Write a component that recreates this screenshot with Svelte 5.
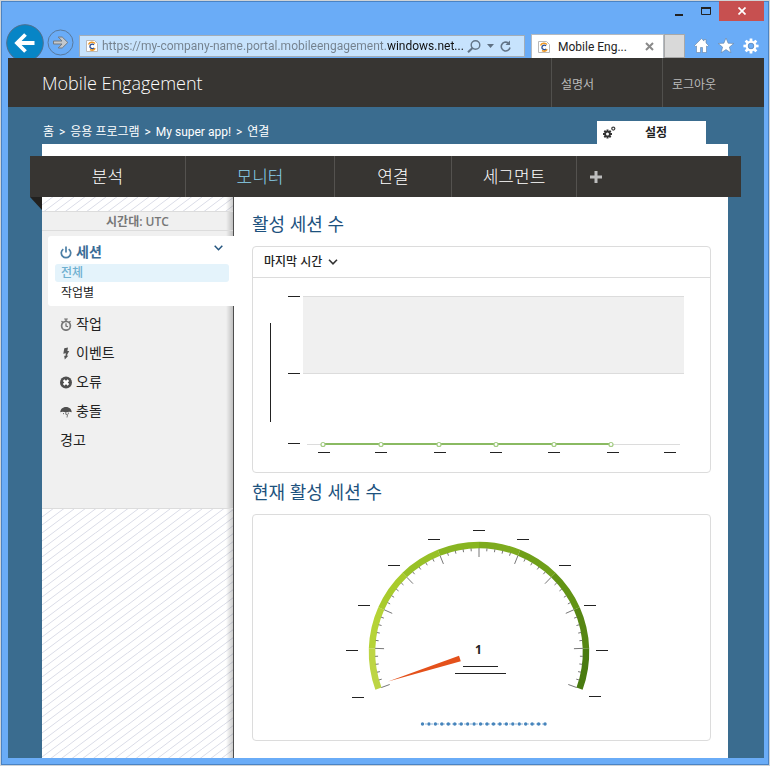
<script>
  const menu = [
    { label: '분석', width: 156 },
    { label: '모니터', width: 149, active: true },
    { label: '연결', width: 117 },
    { label: '세그먼트', width: 125 }
  ];

  const crumbs = ['홈', '응용 프로그램', 'My super app!', '연결'];

  const views = [
    { label: '작업', icon: 'timer' },
    { label: '이벤트', icon: 'bolt' },
    { label: '오류', icon: 'error' },
    { label: '충돌', icon: 'storm' },
    { label: '경고', icon: null }
  ];

  const points = [70, 128, 186, 243, 301, 358];
  const xLabels = [65, 122, 181, 237, 295, 354, 411];

  // Gauge geometry: a 220 degree dial in ten steps.
  const cx = 226;
  const cy = 137;
  const bands = ['#bdd544', '#b5d336', '#a8cb2c', '#98c127', '#88b521', '#7dab1e', '#6f9f19', '#629314', '#568613', '#497b10'];

  function polar(deg, r) {
    const a = (deg * Math.PI) / 180;
    return [cx + r * Math.sin(a), cy - r * Math.cos(a)];
  }

  const arcs = bands.map((color, i) => {
    const from = polar(-110 + i * 22, 107);
    const to = polar(-110 + (i + 1) * 22, 107);
    return { color, d: `M${from} A107 107 0 0 1 ${to}` };
  });

  const ticks = Array.from({ length: 51 }, (_, i) => {
    const deg = -110 + i * 4.4;
    const major = i % 5 === 0;
    const [x1, y1] = polar(deg, 104);
    const [x2, y2] = polar(deg, major ? 95 : 101);
    return { x1, y1, x2, y2 };
  });

  const dialLabels = [[99, 182], [93, 135], [105, 90], [135, 50], [175, 24], [220, 15], [264, 24], [306, 50], [331, 90], [343, 135], [336, 181]];
  const dots = Array.from({ length: 20 }, (_, i) => 169.5 + i * 6.45);

  let url = $state('https://my-company-name.portal.mobileengagement.windows.net...');
</script>

{#snippet favicon()}
  <svg class="favicon" width="12" height="12" viewBox="0 0 12 12" aria-hidden="true">
    <path d="M.5.5h8l3 3v8H.5z" fill="#fff" stroke="#b9b9b9" />
    <path d="M2.500 4.500A4 4 0 0 1 9 3.500M9.200 8.300A4 4 0 0 1 4 9.500" fill="none" stroke="#f09a26" stroke-width="1.600" />
    <path d="M8 4.900A2.300 2.300 0 1 0 8 7.900" fill="none" stroke="#2a4f94" stroke-width="1.300" />
  </svg>
{/snippet}

<div class="window">
  <header class="chrome">
    <div class="caption">
      <button aria-label="Minimize"><svg width="10" height="10"><path d="M1 8h8v3H1z" fill="#222" /></svg></button>
      <button aria-label="Maximize"><svg width="10" height="8"><path d="M.5 1.500h9v6h-9z" fill="none" stroke="#222" /><path d="M0 0h10v2H0z" fill="#222" /></svg></button>
      <button class="close" aria-label="Close"><svg width="8" height="8"><path d="M.5.500l7 7M7.500.500l-7 7" stroke="#fff" stroke-width="1.700" /></svg></button>
    </div>
    <div class="toolbar">
      <button class="back" aria-label="Back">
        <svg width="38" height="38" viewBox="0 0 38 38">
          <circle cx="19" cy="19" r="18.300" fill="#0785c6" stroke="#4f6f8d" />
          <path d="M28.500 19H11M19.500 10.500L11 19l8.500 8.500" fill="none" stroke="#fff" stroke-width="3.800" />
        </svg>
      </button>
      <button class="forward" aria-label="Forward">
        <svg width="27" height="27" viewBox="0 0 27 27">
          <circle cx="13.500" cy="13.500" r="12.500" fill="none" stroke="#59799c" />
          <path d="M6.500 12h8.500l-3.800-4h4l5.600 5.500-5.600 5.500h-4L15 15H6.500z" fill="#c3c8cd" stroke="#737b84" />
        </svg>
      </button>
      <div class="address">
        {@render favicon()}
        <input aria-label="Address" bind:value={url} />
        <div class="address-tools">
          <button aria-label="Search">
            <svg width="14" height="13"><circle cx="8.500" cy="5" r="4.300" fill="none" stroke="#627487" stroke-width="1.400" /><path d="M5.500 8L1 12.300" stroke="#627487" stroke-width="2" /></svg>
          </button>
          <button aria-label="Show address list">
            <svg width="7" height="4"><path d="M0 0h7L3.500 4z" fill="#5f7183" /></svg>
          </button>
          <button aria-label="Refresh">
            <svg width="12" height="13"><path d="M8 2.800A4.400 4.400 0 1 0 10 7.500" fill="none" stroke="#627487" stroke-width="1.600" /><path d="M5.500 4.900H10V.500z" fill="#627487" /></svg>
          </button>
        </div>
      </div>
      <div class="page-tab">
        {@render favicon()}
        <span>Mobile Eng...</span>
        <button aria-label="Close tab"><svg width="9" height="9"><path d="M1 1l7 7M8 1L1 8" stroke="#8a8a8a" stroke-width="2" /></svg></button>
      </div>
      <button class="new-tab" aria-label="New tab"></button>
      <div class="tools">
        <button aria-label="Home">
          <svg width="15" height="15"><path d="M7.500.600L.5 7.500l1.200 1L2.500 8v6.500h4V9.500h2v5h4V8l.8.500 1.200-1-2.500-2.500V1.500h-2v1.600z" fill="#fff" stroke="#66819f" stroke-width=".6" /></svg>
        </button>
        <button aria-label="Favorites">
          <svg width="16" height="15"><path d="M8 0l2.100 5.200 5.700.3-4.400 3.600 1.500 5.700L8 11.600l-4.900 3.200 1.500-5.700L.2 5.500l5.700-.3z" fill="#fff" stroke="#66819f" stroke-width=".6" /></svg>
        </button>
        <button aria-label="Tools">
          <svg width="16" height="16" viewBox="-8 -8 16 16">
            {#each [0, 45, 90, 135, 180, 225, 270, 315] as a}
              <path d="M-1.600-4L-1.300-7.600H1.300L1.600-4z" transform="rotate({a})" fill="#fff" />
            {/each}
            <circle r="4.200" fill="none" stroke="#fff" stroke-width="2.200" /><circle r="2.800" fill="#6aacf7" stroke="#66819f" stroke-width=".6" />
          </svg>
        </button>
      </div>
    </div>
  </header>

  <div class="site">
    <div class="topbar">
      <h1>Mobile Engagement</h1>
      <a class="docs" href="#docs">설명서</a>
      <a class="logout" href="#logout">로그아웃</a>
    </div>

    <div class="pathbar">
      <nav class="crumbs" aria-label="Breadcrumb">
        {#each crumbs as crumb, i}
          {#if i}<span>&gt;</span>{/if}
          <a href="#path">{crumb}</a>
        {/each}
      </nav>
      <a class="settings" href="#settings">
        <svg width="13" height="13" viewBox="0 0 13 13" aria-hidden="true">
          <g transform="translate(4.500 8)">
            {#each [0, 45, 90, 135] as a}<path d="M-1-4.500h2v9h-2z" transform="rotate({a})" fill="#333" />{/each}
            <circle r="3.200" fill="#333" /><circle r="1.500" fill="#fff" />
          </g>
          <circle cx="10.300" cy="2.600" r="1.500" fill="none" stroke="#444" stroke-width="1.300" />
        </svg>
        <span>설정</span>
      </a>
    </div>

    <div class="sheet">
      <nav class="menu" aria-label="Main">
        {#each menu as item}
          <a href="#menu" class:active={item.active} style="width: {item.width}px">{item.label}</a>
        {/each}
        <button aria-label="Add"><svg width="12" height="12"><path d="M6 0v12M0 6h12" stroke="#bdbdbd" stroke-width="3" /></svg></button>
      </nav>

      <div class="body">
        <aside>
          <div class="panel">
            <div class="zone">시간대: UTC</div>
            <div class="group">
              <button class="group-title">
                <svg width="12" height="13"><path d="M3.300 3.100A4.700 4.700 0 1 0 8.700 3.100" fill="none" stroke="#4b7fa6" stroke-width="1.700" /><path d="M6 .5v6" stroke="#4b7fa6" stroke-width="1.700" /></svg>
                <span>세션</span>
                <svg class="chev" width="9" height="6"><path d="M.7.700l3.800 4 3.800-4" fill="none" stroke="#24557f" stroke-width="1.500" /></svg>
              </button>
              <a class="sub current" href="#all">전체</a>
              <a class="sub" href="#by-job">작업별</a>
            </div>
            <ul>
              {#each views as view}
                <li>
                  <a href="#view">
                    {#if view.icon}
                      <svg width="12" height="13" viewBox="0 0 12 13" aria-hidden="true">
                        {#if view.icon === 'timer'}
                          <circle cx="6" cy="7.800" r="4.400" fill="none" stroke="#777" stroke-width="1.700" />
                          <path d="M4.200 1h3.600M6 1v2.500M6 5.300V8l2 .8M1.500 3.200l1.200 1M10.500 3.200l-1.200 1" fill="none" stroke="#666" stroke-width="1.200" />
                        {:else if view.icon === 'bolt'}
                          <path d="M4.300 1.200l3.700-.7-.6 3.600 1.800-.2-2.400 4.600 1.500.2-3.500 3.700-.6-3.600 1.200.1.500-2.600-2.600.4z" fill="#555" />
                        {:else if view.icon === 'error'}
                          <circle cx="6" cy="6.500" r="6" fill="#4f4f4f" />
                          <path d="M3.600 4.100l4.800 4.800M8.400 4.100L3.600 8.900" stroke="#fff" stroke-width="2.300" />
                        {:else}
                          <path d="M.3 7.200C.3 4.500 2.500 2 6 2s5.700 2.500 5.700 5.200L9.500 6.800 6 7.300 2.500 6.800z" fill="#4f4f4f" />
                          <path d="M5.800 7v2.300l1.700.3-.5 2.900M3.500 8v1.200M8.300 7.500v1.700" fill="none" stroke="#777" stroke-width="1" />
                        {/if}
                      </svg>
                    {/if}
                    <span>{view.label}</span>
                  </a>
                </li>
              {/each}
            </ul>
          </div>
        </aside>

        <main>
          <h2>활성 세션 수</h2>
          <section class="card">
            <div class="card-head">
              <label>
                <select aria-label="기간"><option>마지막 시간</option></select>
                <svg width="10" height="6"><path d="M1 .800l4 4 4-4" fill="none" stroke="#333" stroke-width="1.600" /></svg>
              </label>
            </div>
            <svg class="plot" viewBox="0 0 457 194" role="img" aria-label="활성 세션 수">
              <path d="M50 18h381v78H50z" fill="#f0f0f0" />
              <path d="M50 18.500h381M50 95.500h381M54 166.500h373" stroke="#dcdcdc" />
              <path d="M17.500 45v99M35 18.500h12M35 95.500h12M35 165.500h12" stroke="#222" />
              {#each xLabels as x}<path d="M{x} 174.500h12" stroke="#222" />{/each}
              <path d="M70 166h288" stroke="#8aba62" stroke-width="2" />
              {#each points as x}<circle cx={x} cy="166.500" r="2" fill="#fff" stroke="#a4cc84" stroke-width="1.200" />{/each}
            </svg>
          </section>

          <h2>현재 활성 세션 수</h2>
          <section class="card">
            <svg class="plot" viewBox="0 0 457 225" role="img" aria-label="현재 활성 세션 수">
              {#each arcs as arc}<path d={arc.d} fill="none" stroke={arc.color} stroke-width="6.500" />{/each}
              {#each ticks as t}<path d="M{t.x1} {t.y1}L{t.x2} {t.y2}" stroke="#777" />{/each}
              {#each dialLabels as [x, y]}<path d="M{x} {y}.5h12" stroke="#222" />{/each}
              <path d="M135 166.500L206 140.700l1.800 5.600z" fill="#e4511b" />
              <text x="225.500" y="139" text-anchor="middle">1</text>
              <path d="M210 151.500h35M202 158.500h51" stroke="#222" />
              <path d="M169 209h124" stroke="#8fb6da" stroke-dasharray="2 1" />
              {#each dots as x}<circle cx={x} cy="209" r="1.700" fill="#4684bb" />{/each}
            </svg>
          </section>
        </main>
      </div>
    </div>
  </div>
</div>

<style>
  .window {
    box-sizing: border-box;
    min-height: 100vh;
    display: flex;
    flex-direction: column;
    padding: 0 5px 7px 7px;
    border: 1px solid #cfd3d6;
    background: #6aacf7;
    font-family: "Open Sans", "Noto Sans CJK KR", sans-serif;
    font-size: 12px;
    color: #222;
    box-shadow: inset 0 0 0 1px #4a83c4;
  }
  a { color: inherit; text-decoration: none; }
  button {
    padding: 0;
    border: 0;
    background: none;
    font: inherit;
    color: inherit;
    display: flex;
    align-items: center;
    justify-content: center;
  }
  svg { display: block; flex: none; }

  .chrome { height: 57px; display: flex; flex-direction: column; font-family: Roboto, "Noto Sans CJK KR", sans-serif; }
  .caption { height: 20px; display: flex; justify-content: flex-end; }
  .caption button { width: 27px; }
  .caption .close { width: 45px; background: #c75050; }
  .toolbar { height: 37px; display: flex; align-items: flex-end; }
  .back { align-self: flex-start; height: 34px; margin: 3px 0 0 -2px; overflow: hidden; align-items: flex-start; }
  .forward { margin: 0 5px 2px 3px; }
  .address {
    box-sizing: border-box;
    flex: 1;
    min-width: 0;
    height: 22px;
    margin-bottom: 1px;
    display: flex;
    align-items: center;
    gap: 4px;
    padding: 0 12px 0 6px;
    border: 1px solid #a3adb7;
    background: #c7e3fd;
  }
  .address input {
    flex: 1;
    min-width: 0;
    padding: 0;
    border: 0;
    font: inherit;
    color: transparent;
    caret-color: #222;
    background: linear-gradient(to right, #73808c 284px, #111 284px);
    background-clip: text;
    -webkit-background-clip: text;
  }
  .address-tools { display: flex; align-items: center; gap: 6px; margin-left: -4px; }
  .page-tab {
    box-sizing: border-box;
    width: 133px;
    height: 24px;
    margin-left: 6px;
    padding: 0 9px 0 6px;
    display: flex;
    align-items: center;
    gap: 8px;
    border: 1px solid #b5bac0;
    border-bottom: 0;
    background: #fff;
  }
  .page-tab span { flex: 1; white-space: nowrap; }
  .new-tab { box-sizing: border-box; width: 21px; height: 24px; border: 1px solid #a8a8a8; background: #d9d9d9; }
  .tools { display: flex; align-items: center; gap: 9px; height: 25px; padding: 0 5px 0 9px; }

  .site { flex: 1; display: flex; flex-direction: column; background: #3a6c8f; }
  .topbar { height: 49px; display: flex; align-items: stretch; background: #373532; color: #bbb; }
  h1 { flex: 1; margin: 0; padding-left: 34px; font-size: 18px; font-weight: 300; line-height: 50px; color: #fff; }
  .topbar a { box-sizing: border-box; padding-left: 9px; border-left: 1px solid #51504d; line-height: 53px; }
  .docs { width: 111px; }
  .logout { width: 102px; }

  .pathbar { height: 37px; padding: 0 58px 0 35px; display: flex; align-items: flex-end; justify-content: space-between; }
  .crumbs { display: flex; gap: 5px; color: #fff; line-height: 24px; font-family: Roboto, "Noto Sans CJK KR", sans-serif; }
  .settings { box-sizing: border-box; width: 109px; height: 23px; padding-left: 6px; display: flex; align-items: center; background: #fff; font-weight: 700; }
  .settings span { flex: 1; padding-left: 29px; line-height: 20px; }

  .sheet { flex: 1; margin: 0 36px 0 34px; padding-top: 12px; display: flex; flex-direction: column; background: #fff; }
  .menu { position: relative; height: 41px; margin: 0 -13px 0 -12px; display: flex; background: #373532; color: #fff; font-size: 17px; font-weight: 300; line-height: 41px; }
  .menu::after { content: ''; position: absolute; left: 0; top: 100%; width: 12px; height: 13px; background: #22211f; clip-path: polygon(0 0, 100% 0, 100% 100%); }
  .menu a { box-sizing: border-box; border-right: 1px solid #54524f; text-align: center; }
  .menu .active { color: #8ad2ee; }
  .menu button { width: 38px; }

  .body { flex: 1; display: flex; }
  aside {
    box-sizing: border-box;
    width: 192px;
    padding-top: 14px;
    border-right: 1px solid #4d4d4d;
    background:
      linear-gradient(to left, #0003, #0000 7px),
      url("data:image/svg+xml,%3Csvg xmlns='http://www.w3.org/2000/svg' width='32' height='24'%3E%3Cpath d='M-4 11L16-4M-4 19L32-8M-4 27L36-3M4 29L36 5M15 29L36 13' stroke='%23dadce7' fill='none'/%3E%3C/svg%3E"),
      #fff;
  }
  .panel { height: 296px; border: solid #dcdcdc; border-width: 1px 0; background: linear-gradient(to left, #0003, #0000 7px), #f0f0f0; }
  .zone { height: 18px; border-bottom: 1px solid #dcdcdc; text-align: center; line-height: 20px; font-weight: 600; color: #777; }
  .group { position: relative; margin: 5px -1px 0 6px; padding: 4px 5px 4px 7px; border-radius: 3px 0 0 3px; background: #fff; }
  .group-title { width: 100%; height: 24px; gap: 4px; padding: 0 6px 0 5px; justify-content: flex-start; color: #3a6c96; font-size: 14px; font-weight: 700; line-height: 24px; }
  .chev { margin: 0 0 8px auto; }
  .sub { display: block; padding-left: 6px; border-radius: 3px; line-height: 18px; }
  .sub + .sub { margin-top: 2px; }
  .current { background: #e4f3fb; color: #6fb0d0; font-weight: 500; }
  ul { margin: 4px 0 0; padding: 0; list-style: none; }
  li a { display: flex; align-items: center; gap: 4px; height: 28px; padding-left: 18px; font-size: 14px; line-height: 28px; }
  li { padding-bottom: 1px; }

  main { flex: 1; min-width: 0; padding: 14px 17px 8px 18px; }
  h2 { margin: 0; font-size: 18px; font-weight: 400; line-height: 27px; color: #1d527e; }
  .card { margin: 8px 0 6px; border: 1px solid #dcdcdc; border-radius: 4px; }
  .card-head { height: 30px; padding-left: 11px; border-bottom: 1px solid #dcdcdc; display: flex; align-items: center; }
  .card-head label { display: flex; align-items: center; gap: 5px; }
  select { appearance: none; padding: 0; border: 0; background: none; font: inherit; font-weight: 500; color: inherit; line-height: 20px; }
  .plot { width: 100%; height: auto; }
  text { font-weight: 700; font-size: 12px; fill: #222; }
</style>
